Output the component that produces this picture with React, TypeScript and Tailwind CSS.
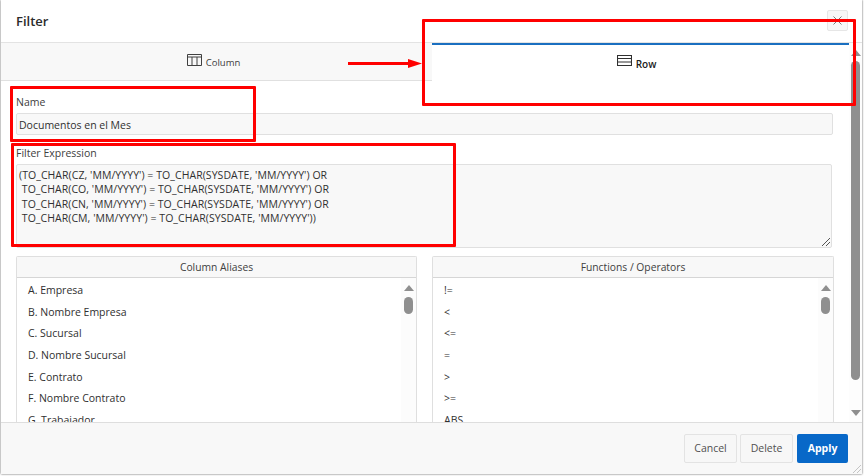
import React from "react";

const aliases = ["A. Empresa", "B. Nombre Empresa", "C. Sucursal", "D. Nombre Sucursal", "E. Contrato", "F. Nombre Contrato", "G. Trabajador"];
const funcs = ["!=", "<", "<=", "=", ">", ">=", "ABS"];

function MiniScroll() {
  return (
    <div className="absolute right-0 top-0 bottom-0 w-[15px] bg-[#fcfcfc] flex flex-col items-center pt-[7px]">
      <svg width="10" height="6" viewBox="0 0 10 6"><path d="M5 0L10 6H0Z" fill="#8f8f8f" /></svg>
      <div className="mt-[6px] w-[9px] h-[17px] rounded-full bg-[#8f8f8f]" />
    </div>
  );
}

function Panel({ title, items, className }: { title: string; items: string[]; className: string }) {
  return (
    <div className={`flex flex-col border-x border-t border-[#dfdfdf] rounded-t-[2px] ${className}`}>
      <div className="h-[21px] shrink-0 bg-[#f8f8f8] border-b border-[#d6d6d6] pt-[2px] flex items-center justify-center text-[#404040] text-[10.3px]">{title}</div>
      <div className="relative h-[144px] overflow-hidden pl-[11px] pt-[2px]">
        {items.map((t) => (
          <div key={t} className="h-[21.7px] flex items-center text-[#303030] whitespace-pre">{t}</div>
        ))}
        <MiniScroll />
      </div>
    </div>
  );
}

export default function App() {
  return (
    <div className="relative w-[864px] h-[476px] overflow-hidden bg-white text-[10.5px] font-['Open_Sans',sans-serif]">
      <div className="w-[861px] h-[474px] ml-[1px] bg-white flex flex-col shadow-[0_0_2px_#555]">
        <div className="h-[43px] shrink-0 relative flex items-center pl-[15px] pt-[2px] border-b border-[#e3e3e3]">
          <span className="text-[13px] font-semibold text-[#2b2b2b]">Filter</span>
          <button className="absolute right-[14px] top-[10px] w-[21px] h-[21px] bg-[#f7f7f7] border border-[#e6e6e6] rounded-[2px] flex items-center justify-center">
            <svg width="9" height="9" viewBox="0 0 9 9"><path d="M0.5 0.5L8.5 8.5M8.5 0.5L0.5 8.5" stroke="#7a7a7a" strokeWidth="1" fill="none" /></svg>
          </button>
        </div>
        <div className="flex-1 min-h-0 flex">
          <div className="w-[848px] flex flex-col min-h-0">
            <div className="h-[38px] shrink-0 flex">
              <div className="w-[431px] bg-[#f8f8f8] border-b border-[#e0e0e0] flex items-center justify-center gap-[4px] pr-[6px] text-[#404040] text-[9.5px]">
                <svg width="15" height="12" viewBox="0 0 15 12" className="-mt-[4px]"><path d="M0.5 0.5H14.5V11.5H0.5ZM0.5 3H14.5M5 3V11.5M10 3V11.5" fill="none" stroke="#404040" strokeWidth="1" /></svg>
                <span className="mt-[4px]">Column</span>
              </div>
              <div className="flex-1 bg-white border-t-2 border-[#1a6fc0] flex items-center justify-center gap-[4px] pr-[8px] text-[#202020] text-[10px] font-semibold">
                <svg width="15" height="11" viewBox="0 0 15 11" className="-mt-[5px]"><path d="M0.5 0.5H14.5V10.5H0.5ZM0.5 3.5H14.5M0.5 7H14.5" fill="none" stroke="#303030" strokeWidth="1.1" /></svg>
                <span className="mt-[2px]">Row</span>
              </div>
            </div>
            <div className="flex-1 min-h-0 overflow-hidden pl-[15px] pt-[14px] flex flex-col items-start">
              <label className="h-[15px] flex items-center text-[#404040]">Name</label>
              <div className="mt-[3px] w-[817px] h-[22px] shrink-0 bg-[#f8f8f8] border border-[#e0e0e0] rounded-[2px] pl-[2px] pt-[3px] flex items-center text-[#303030]">Documentos en el Mes</div>
              <label className="mt-[11px] h-[15px] flex items-center text-[#404040]">Filter Expression</label>
              <div className="relative mt-[3px] w-[816px] h-[84px] shrink-0 bg-[#f8f8f8] border border-[#e0e0e0] rounded-[2px] pl-[2px] pt-[3px] leading-[14.4px] tracking-[0.06px] text-[#303030] whitespace-pre">
                {"(TO_CHAR(CZ, 'MM/YYYY') = TO_CHAR(SYSDATE, 'MM/YYYY') OR\n TO_CHAR(CO, 'MM/YYYY') = TO_CHAR(SYSDATE, 'MM/YYYY') OR\n TO_CHAR(CN, 'MM/YYYY') = TO_CHAR(SYSDATE, 'MM/YYYY') OR\n TO_CHAR(CM, 'MM/YYYY') = TO_CHAR(SYSDATE, 'MM/YYYY'))"}
                <svg width="8" height="8" viewBox="0 0 8 8" className="absolute right-[1px] bottom-[1px]"><path d="M0 8L8 0M4 8L8 4" stroke="#555" strokeWidth="1" fill="none" /></svg>
              </div>
              <div className="mt-[8px] flex gap-[15px]">
                <Panel title="Column Aliases" items={aliases} className="w-[401px]" />
                <Panel title="Functions / Operators" items={funcs} className="w-[402px]" />
              </div>
            </div>
          </div>
          <div className="flex-1 flex flex-col items-center bg-[#fdfdfd] pt-[7px]">
            <svg width="10" height="6" viewBox="0 0 10 6"><path d="M5 0L10 6H0Z" fill="#8f8f8f" /></svg>
            <div className="mt-[5px] w-[9px] h-[319px] rounded-full bg-[#8f8f8f] shrink-0" />
            <svg width="10" height="6" viewBox="0 0 10 6" className="mt-[30px]"><path d="M5 6L10 0H0Z" fill="#8f8f8f" /></svg>
          </div>
        </div>
        <div className="h-[52px] shrink-0 bg-[#f8f8f8] border-t border-[#dedede] flex items-center justify-end gap-[4px] pr-[14px] relative">
          <button className="w-[53px] h-[29px] mr-[-1px] bg-[#f7f7f7] border border-[#e3e3e3] rounded-[2px] text-[#505050]">Cancel</button>
          <button className="w-[53px] h-[29px] bg-[#f7f7f7] border border-[#e3e3e3] rounded-[2px] text-[#505050]">Delete</button>
          <button className="w-[51px] h-[29px] bg-[#0868c8] rounded-[2px] text-white font-bold">Apply</button>
          <svg width="8" height="8" viewBox="0 0 8 8" className="absolute right-[1px] bottom-[1px]"><path d="M0 8L8 0M4 8L8 4" stroke="#c4c4c4" strokeWidth="1" fill="none" /></svg>
        </div>
      </div>

      <div className="absolute left-[10px] top-[86px] w-[246px] h-[56px] border-[3px] border-[#ff0000] rounded-[1px]" />
      <div className="absolute left-[11px] top-[143px] w-[445px] h-[104px] border-[3px] border-[#ff0000] rounded-[1px]" />
      <div className="absolute left-[422px] top-[19px] w-[434px] h-[87px] border-[3px] border-[#ff0000] rounded-[1px]" />
      <svg width="76" height="12" viewBox="0 0 76 12" className="absolute left-[348px] top-[58px]">
        <path d="M0 4H60V1L74 5.5L60 10V7H0Z" fill="#ff0000" />
      </svg>
    </div>
  );
}
